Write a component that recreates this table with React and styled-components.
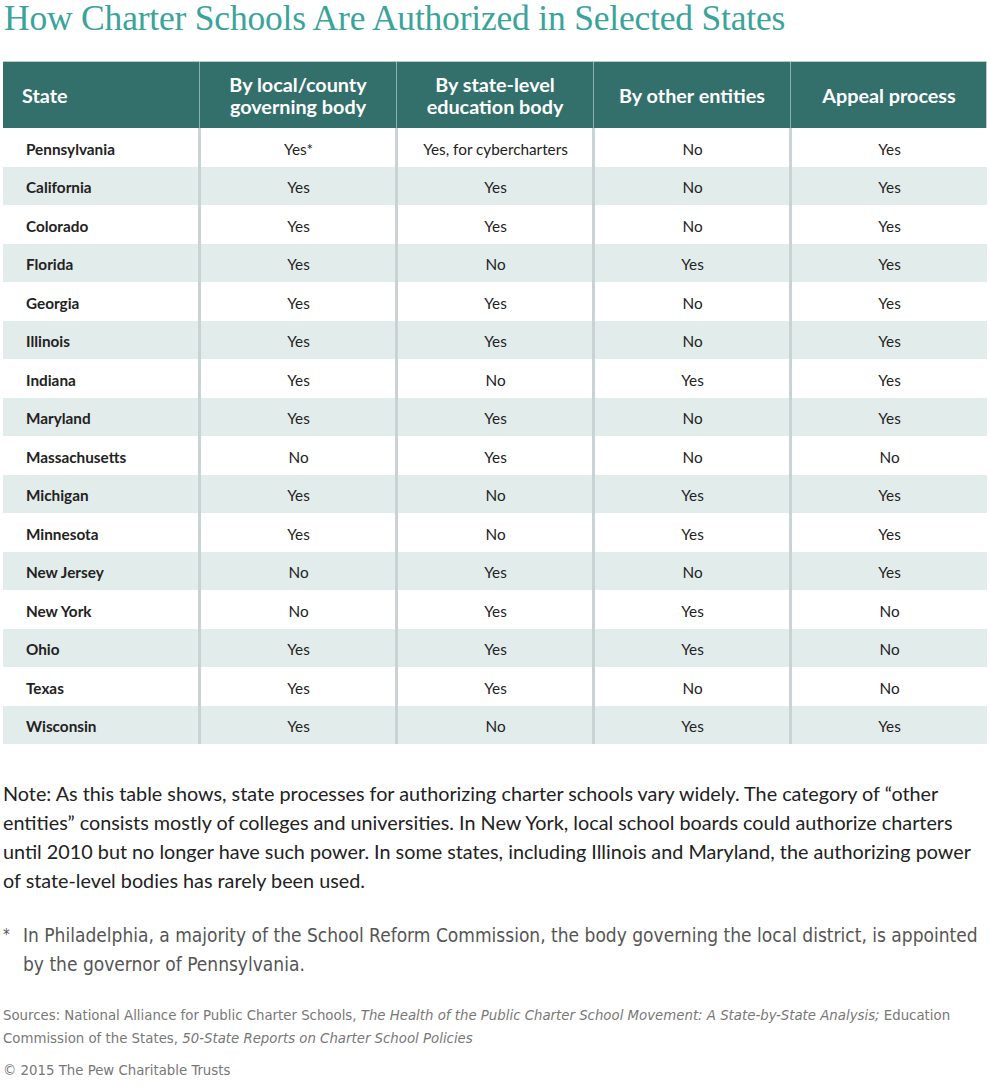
import React from 'react';
import styled, { createGlobalStyle } from 'styled-components';

const GlobalStyle = createGlobalStyle`
  body {
    margin: 0;
    background: #fff;
    font-family: Lato, "Open Sans", sans-serif;
  }
`;

const Page = styled.div`
  width: 990px;
  padding: 0 3px;
  box-sizing: border-box;
`;

const Title = styled.h1`
  margin: 0;
  padding: 0 0 0 1px;
  height: 61px;
  font-family: "Liberation Serif", serif;
  font-weight: 400;
  font-size: 35.5px;
  line-height: 36px;
  color: #3aa39a;
  letter-spacing: -0.2px;
`;

const Table = styled.div`
  width: 984px;
  border-top: 1px solid #b9cbc9;
`;

const cols = '196px repeat(4, 197px)';

const HeadRow = styled.div`
  display: grid;
  grid-template-columns: ${cols};
  height: 66px;
  background: #336f6b;
  border-right: 1px solid #b9cbc9;
`;

const HeadCell = styled.div`
  display: flex;
  align-items: center;
  justify-content: ${(p) => (p.$first ? 'flex-start' : 'center')};
  padding-left: ${(p) => (p.$first ? '19px' : '0')};
  border-left: ${(p) => (p.$first ? 'none' : '1px solid #8fb0ac')};
  color: #fff;
  font-weight: 700;
  font-size: 19.8px;
  line-height: 22px;
  text-align: center;
`;

const Row = styled.div`
  display: grid;
  grid-template-columns: ${cols};
  height: 38.5px;
  background: ${(p) => (p.$alt ? '#e2eceb' : '#fff')};
`;

const Cell = styled.div`
  display: flex;
  align-items: center;
  justify-content: ${(p) => (p.$first ? 'flex-start' : 'center')};
  padding-top: 3px;
  padding-left: ${(p) => (p.$first ? '23px' : '0')};
  margin-left: ${(p) => (p.$first ? '0' : '-1px')};
  border-left: ${(p) => (p.$first ? 'none' : '3px solid #c9d3d3')};
  font-size: 15.3px;
  font-weight: ${(p) => (p.$first ? 700 : 400)};
  color: #222;
`;

const Note = styled.p`
  margin: 35px 0 0;
  font-family: Lato, sans-serif;
  font-size: 19.8px;
  line-height: 29px;
  color: #222;
`;

const Footnote = styled.div`
  display: flex;
  margin-top: 26px;
  font-family: "Liberation Sans Narrow", "DejaVu Sans Condensed", sans-serif;
  font-stretch: condensed;
  font-size: 19px;
  line-height: 29px;
  color: #555;
`;

const Star = styled.span`
  width: 20px;
  flex: none;
  font-size: 15px;
`;

const Sources = styled.p`
  margin: 24px 0 0;
  font-family: "Liberation Sans Narrow", "DejaVu Sans Condensed", sans-serif;
  font-stretch: condensed;
  font-size: 14.8px;
  line-height: 23px;
  color: #777;
`;

const Copy = styled(Sources)`
  margin-top: 9px;
`;

const headers = [
  'State',
  <>By local/county<br />governing body</>,
  <>By state-level<br />education body</>,
  'By other entities',
  'Appeal process',
];

const rows = [
  ['Pennsylvania', 'Yes*', 'Yes, for cybercharters', 'No', 'Yes'],
  ['California', 'Yes', 'Yes', 'No', 'Yes'],
  ['Colorado', 'Yes', 'Yes', 'No', 'Yes'],
  ['Florida', 'Yes', 'No', 'Yes', 'Yes'],
  ['Georgia', 'Yes', 'Yes', 'No', 'Yes'],
  ['Illinois', 'Yes', 'Yes', 'No', 'Yes'],
  ['Indiana', 'Yes', 'No', 'Yes', 'Yes'],
  ['Maryland', 'Yes', 'Yes', 'No', 'Yes'],
  ['Massachusetts', 'No', 'Yes', 'No', 'No'],
  ['Michigan', 'Yes', 'No', 'Yes', 'Yes'],
  ['Minnesota', 'Yes', 'No', 'Yes', 'Yes'],
  ['New Jersey', 'No', 'Yes', 'No', 'Yes'],
  ['New York', 'No', 'Yes', 'Yes', 'No'],
  ['Ohio', 'Yes', 'Yes', 'Yes', 'No'],
  ['Texas', 'Yes', 'Yes', 'No', 'No'],
  ['Wisconsin', 'Yes', 'No', 'Yes', 'Yes'],
];

const App = () => (
  <Page>
    <GlobalStyle />
    <Title>How Charter Schools Are Authorized in Selected States</Title>
    <Table>
      <HeadRow>
        {headers.map((h, i) => (
          <HeadCell key={i} $first={i === 0}>{h}</HeadCell>
        ))}
      </HeadRow>
      {rows.map((r, ri) => (
        <Row key={r[0]} $alt={ri % 2 === 1}>
          {r.map((c, ci) => (
            <Cell key={ci} $first={ci === 0}>{c}</Cell>
          ))}
        </Row>
      ))}
    </Table>
    <Note>
      Note: As this table shows, state processes for authorizing charter schools vary widely. The
      category of “other entities” consists mostly of colleges and universities. In New York, local
      school boards could authorize charters until 2010 but no longer have such power. In some
      states, including Illinois and Maryland, the authorizing power of state-level bodies has
      rarely been used.
    </Note>
    <Footnote>
      <Star>*</Star>
      <span>
        In Philadelphia, a majority of the School Reform Commission, the body governing the local
        district, is appointed by the governor of Pennsylvania.
      </span>
    </Footnote>
    <Sources>
      Sources: National Alliance for Public Charter Schools,{' '}
      <i>The Health of the Public Charter School Movement: A State-by-State Analysis;</i> Education
      Commission of the States, <i>50-State Reports on Charter School Policies</i>
    </Sources>
    <Copy>© 2015 The Pew Charitable Trusts</Copy>
  </Page>
);

export default App;
